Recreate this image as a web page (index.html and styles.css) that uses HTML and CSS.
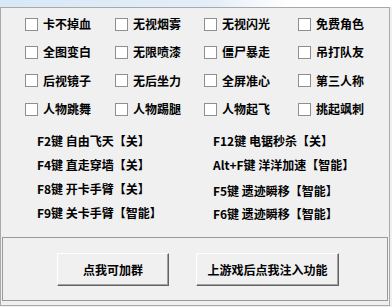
FILE: index.html
```html
<!DOCTYPE html>
<html lang="zh-CN">
<head>
    <meta charset="UTF-8">
    <title>辅助</title>
    <link rel="stylesheet" href="styles.css">
</head>
<body>
    <div class="title-strip"></div>

    <div class="frame">
        <!-- Toggle options -->
        <div class="options">
            <label class="opt"><span class="box"></span>卡不掉血</label>
            <label class="opt"><span class="box"></span>无视烟雾</label>
            <label class="opt"><span class="box"></span>无视闪光</label>
            <label class="opt"><span class="box"></span>免费角色</label>

            <label class="opt"><span class="box"></span>全图变白</label>
            <label class="opt"><span class="box"></span>无限喷漆</label>
            <label class="opt"><span class="box"></span>僵尸暴走</label>
            <label class="opt"><span class="box"></span>吊打队友</label>

            <label class="opt"><span class="box"></span>后视镜子</label>
            <label class="opt"><span class="box"></span>无后坐力</label>
            <label class="opt"><span class="box"></span>全屏准心</label>
            <label class="opt"><span class="box"></span>第三人称</label>

            <label class="opt"><span class="box"></span>人物跳舞</label>
            <label class="opt"><span class="box"></span>人物踢腿</label>
            <label class="opt"><span class="box"></span>人物起飞</label>
            <label class="opt"><span class="box"></span>挑起飒刺</label>
        </div>

        <!-- Hotkeys -->
        <div class="hotkeys">
            <div class="col">
                <div class="key">F2键 自由飞天【关】</div>
                <div class="key">F4键 直走穿墙【关】</div>
                <div class="key">F8键 开卡手臂【关】</div>
                <div class="key">F9键 关卡手臂【智能】</div>
            </div>
            <div class="col">
                <div class="key">F12键 电锯秒杀【关】</div>
                <div class="key">Alt+F键 洋洋加速【智能】</div>
                <div class="key shift">F5键 遗迹瞬移【智能】</div>
                <div class="key">F6键 遗迹瞬移【智能】</div>
            </div>
        </div>

        <!-- Actions -->
        <div class="actions">
            <button class="btn btn-group">点我可加群</button>
            <button class="btn btn-inject">上游戏后点我注入功能</button>
        </div>
    </div>
</body>
</html>
```

FILE: styles.css
```css
body { margin: 0; width: 392px; height: 307px; background: #f0f0f0; font-family: "Noto Sans CJK SC", "Microsoft YaHei", sans-serif; font-size: 12px; font-weight: bold; color: #000; overflow: hidden; }
.title-strip { height: 7px; background: linear-gradient(to right, #d8e8f6 0%, #e4eef8 55%, #f4f8fc 65%, #ffffff 75%); }
.frame { width: 390px; height: 299px; box-sizing: border-box; border: 1px solid #a9a9a9; display: flex; flex-direction: column; }

.options { display: grid; grid-template-columns: 90px 89px 94px 1fr; grid-auto-rows: 28.3px; padding: 2px 0 0 24px; }
.opt { display: flex; align-items: center; gap: 5px; white-space: nowrap; line-height: 14px; }
.box { width: 13px; height: 13px; box-sizing: border-box; border: 1px solid #8f8f8f; background: #fff; flex: none; }

.hotkeys { display: flex; padding: 6px 0 0 36px; height: 96px; }
.col { width: 180px; }
.key { height: 24px; line-height: 24px; white-space: nowrap; }
.key.shift { margin-top: 2px; height: 23px; }

.actions { margin: 12px 1px 0 1px; height: 64px; box-sizing: border-box; border: 1px solid #9a9a9a; display: flex; padding: 15px 0 0 54px; gap: 27px; }
.btn { height: 33px; box-sizing: border-box; background: #f0f0f0; font: inherit; color: #000; border: 1px solid; border-color: #fff #646464 #646464 #fff; box-shadow: inset -1px -1px #a0a0a0; padding: 0; }
.btn-group { width: 112px; }
.btn-inject { width: 143px; }
```
